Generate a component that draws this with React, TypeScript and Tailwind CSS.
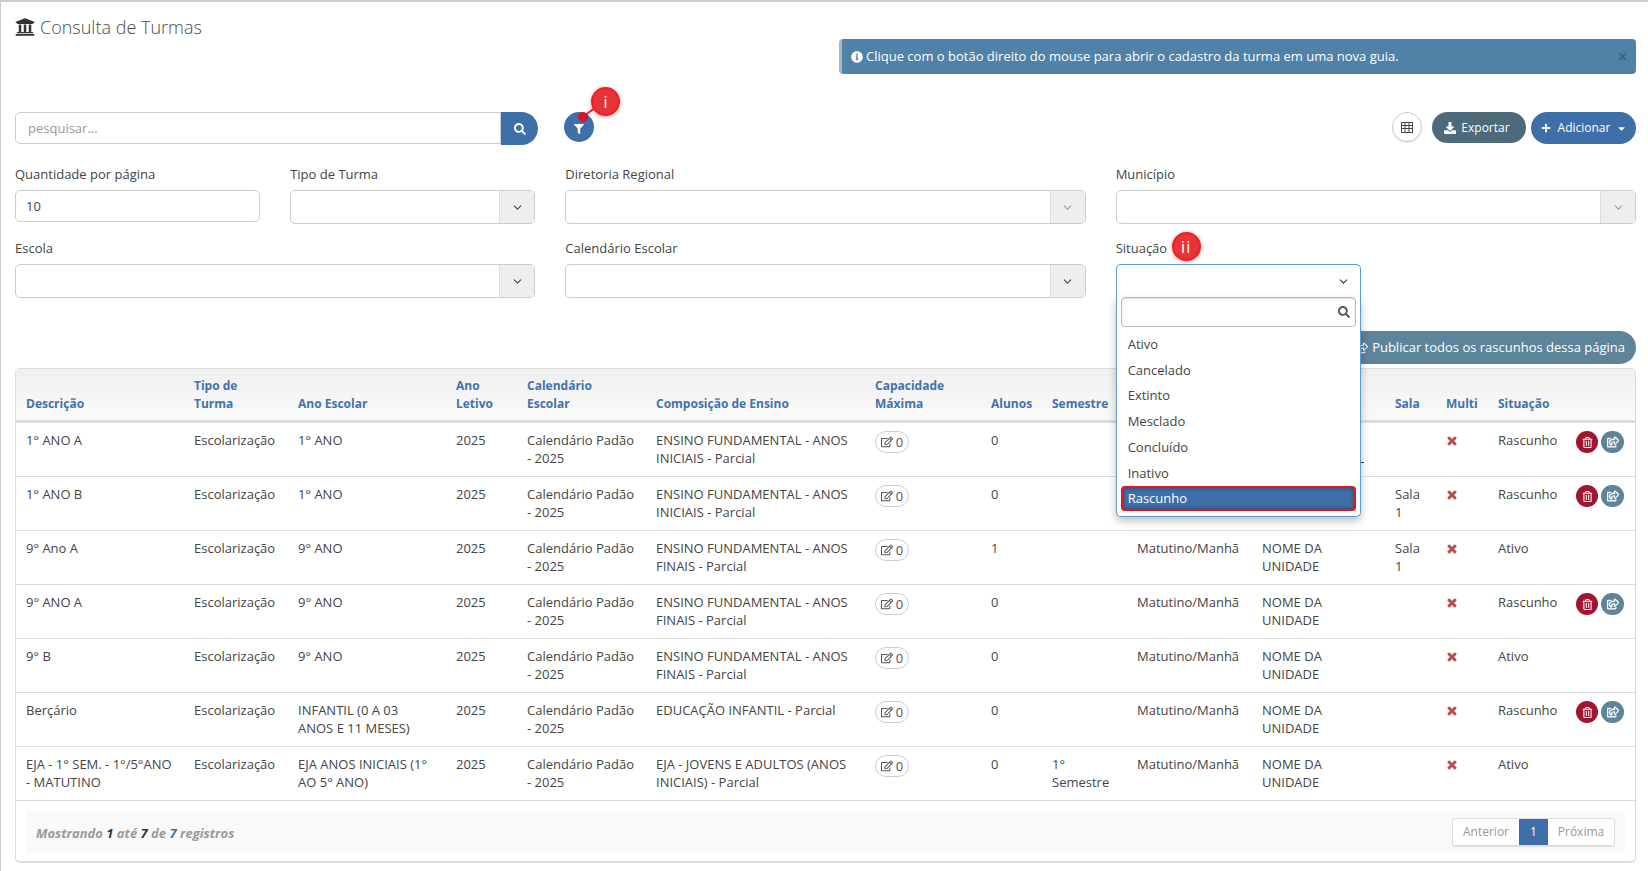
import React from "react";
import { ChevronDown } from "lucide-react";
import {
  FaUniversity, FaSearch, FaFilter, FaDownload, FaPlus, FaCaretDown, FaTimes,
  FaRegTrashAlt, FaRegShareSquare, FaInfoCircle, FaRegEdit,
} from "react-icons/fa";

type Row = {
  d: string; ano: string; aluno: string; comp: string; sem?: string; sala?: string; sit: string;
};

const rows: Row[] = [
  { d: "1° ANO A", ano: "1° ANO", aluno: "0", comp: "ENSINO FUNDAMENTAL - ANOS INICIAIS - Parcial", sit: "Rascunho" },
  { d: "1° ANO B", ano: "1° ANO", aluno: "0", comp: "ENSINO FUNDAMENTAL - ANOS INICIAIS - Parcial", sala: "Sala 1", sit: "Rascunho" },
  { d: "9° Ano A", ano: "9° ANO", aluno: "1", comp: "ENSINO FUNDAMENTAL - ANOS FINAIS - Parcial", sala: "Sala 1", sit: "Ativo" },
  { d: "9° ANO A", ano: "9° ANO", aluno: "0", comp: "ENSINO FUNDAMENTAL - ANOS FINAIS - Parcial", sit: "Rascunho" },
  { d: "9° B", ano: "9° ANO", aluno: "0", comp: "ENSINO FUNDAMENTAL - ANOS FINAIS - Parcial", sit: "Ativo" },
  { d: "Berçário", ano: "INFANTIL (0 A 03 ANOS E 11 MESES)", aluno: "0", comp: "EDUCAÇÃO INFANTIL - Parcial", sit: "Rascunho" },
  { d: "EJA - 1° SEM. - 1°/5°ANO - MATUTINO", ano: "EJA ANOS INICIAIS (1° AO 5° ANO)", aluno: "0", comp: "EJA - JOVENS E ADULTOS (ANOS INICIAIS) - Parcial", sem: "1° Semestre", sit: "Ativo" },
];

const headers = ["Descrição", "Tipo de Turma", "Ano Escolar", "Ano Letivo", "Calendário Escolar", "Composição de Ensino", "Capacidade Máxima", "Alunos", "Semestre", "", "", "Sala", "Multi", "Situação", ""];
const widths = ["w-[168px]", "w-[104px]", "w-[158px]", "w-[71px]", "w-[129px]", "w-[219px]", "w-[116px]", "w-[61px]", "w-[85px]", "w-[125px]", "w-[133px]", "w-[51px]", "w-[52px]", "w-[82px]", "w-[65px]"];
const options = ["Ativo", "Cancelado", "Extinto", "Mesclado", "Concluído", "Inativo"];

function Select({ muted }: { muted?: boolean }) {
  return (
    <div className="flex h-[34px] rounded-[5px] border border-[#ccc] bg-white">
      <div className="flex-1" />
      <div className="flex w-[35px] items-center justify-center rounded-r-[4px] border-l border-[#ddd] bg-[#eeeeee]">
        <ChevronDown size={13} strokeWidth={2} className={muted ? "text-[#999]" : "text-[#444]"} />
      </div>
    </div>
  );
}

function Label({ children }: { children: React.ReactNode }) {
  return <div className="mb-[7px] h-[18px] text-[13px] leading-[18px] text-[#444]">{children}</div>;
}

export default function App() {
  return (
    <div className="relative h-[871px] w-full overflow-hidden border-l border-t-2 border-[#ccc] bg-white pl-[14px] pr-[12px] font-['Open_Sans',sans-serif] text-[13px] text-[#444]">
      <div className="flex h-[72px] items-start justify-between">
        <div className="mt-[15px] flex items-center gap-[5px] text-[#4b4b4b]">
          <FaUniversity size={20} className="text-[#333]" />
          <span className="text-[18px] font-light leading-[20px]">Consulta de Turmas</span>
        </div>
        <div className="mt-[37px] flex h-[35px] w-[797px] items-center rounded-[4px] border-l-[3px] border-[#a3b6c9] bg-[#5082a8] pl-[9px] pr-[8px] text-[13px] text-white">
          <FaInfoCircle size={12} className="mr-[3px]" />
          <span className="flex-1">Clique com o botão direito do mouse para abrir o cadastro da turma em uma nova guia.</span>
          <FaTimes size={11} className="text-[#3a6484]" />
        </div>
      </div>

      <div className="mt-[38px] flex h-[33px] items-start">
        <input
          readOnly
          placeholder="pesquisar..."
          className="h-[32px] w-[486px] rounded-l-[5px] border border-[#ccc] px-[12px] text-[13px] outline-none placeholder:text-[#999]"
        />
        <button className="flex h-[33px] w-[37px] items-center justify-center rounded-r-full bg-[#3f6fa8] text-white">
          <FaSearch size={12} />
        </button>
        <div className="relative ml-[26px] flex h-[30px] w-[30px] items-center justify-center rounded-full bg-[#3f6fa8] text-white">
          <FaFilter size={10} className="mt-[3px]" />
          <div className="absolute left-[16px] top-[-4px] h-[2px] w-[27px] -rotate-[36deg] bg-[#ee1c25]" />
          <div className="absolute left-[14px] top-0 h-[10px] w-[10px] rounded-full bg-[#d8102a]" />
          <div className="absolute left-[27px] top-[-25px] flex h-[29px] w-[29px] items-center justify-center rounded-full border-2 border-[#f81d1d] bg-[#e53538] text-[16px] text-white shadow-[0_1px_4px_rgba(0,0,0,0.3)]">i</div>
        </div>
        <div className="flex-1" />
        <div className="flex h-[30px] w-[30px] items-center justify-center rounded-full border border-[#ccc] bg-white shadow-[0_1px_1px_rgba(0,0,0,0.1)]">
          <svg width="12" height="11" viewBox="0 0 12 11" fill="none" stroke="#444" strokeWidth="1">
            <rect x="0.5" y="0.5" width="11" height="10" />
            <path d="M0.5 3.5H11.5M0.5 6.5H11.5M4 0.5V10.5M8 0.5V10.5" />
          </svg>
        </div>
        <button className="ml-[10px] flex h-[31px] w-[94px] items-center justify-center gap-[5px] rounded-full bg-[#4c6a7a] pr-[4px] text-[12px] text-white">
          <FaDownload size={12} /> Exportar
        </button>
        <button className="ml-[5px] flex h-[32px] w-[105px] items-center justify-center gap-[5px] rounded-full bg-[#3f6fa8] pl-[1px] text-[12px] text-white">
          <FaPlus size={10} className="mr-[2px]" /> Adicionar <FaCaretDown size={11} className="ml-[1px]" />
        </button>
      </div>

      <div className="mt-[20px] grid grid-cols-12 gap-x-[30px] gap-y-[15px]">
        <div className="col-span-2">
          <Label>Quantidade por página</Label>
          <div className="flex h-[32px] items-center rounded-[5px] border border-[#ccc] px-[10px] pt-[1px] text-[13px]">10</div>
        </div>
        <div className="col-span-2">
          <Label>Tipo de Turma</Label>
          <Select />
        </div>
        <div className="col-span-4">
          <Label>Diretoria Regional</Label>
          <Select muted />
        </div>
        <div className="col-span-4">
          <Label>Município</Label>
          <Select muted />
        </div>
        <div className="col-span-4">
          <Label>Escola</Label>
          <Select />
        </div>
        <div className="col-span-4">
          <Label>Calendário Escolar</Label>
          <Select />
        </div>
        <div className="relative z-20 col-span-2">
          <div className="relative">
            <Label>Situação</Label>
            <div className="absolute left-[56px] top-[-7px] flex h-[29px] w-[29px] items-center justify-center rounded-full border-2 border-[#f81d1d] bg-[#e53538] text-[16px] tracking-[1px] text-white shadow-[0_1px_4px_rgba(0,0,0,0.3)]">ii</div>
          </div>
          <div className="relative">
            <div className="flex h-[33px] items-center justify-end rounded-t-[5px] border border-b-0 border-[#5b9bd5] bg-white pr-[10px]">
              <ChevronDown size={13} strokeWidth={2} className="text-[#333]" />
            </div>
            <div className="absolute left-0 right-0 top-full h-[220px] rounded-b-[5px] border border-t-0 border-[#5b9bd5] bg-white px-[4px] shadow-[0_4px_8px_rgba(0,0,0,0.25)]">
              <div className="absolute left-[calc(100%+1px)] top-[165px] h-[1px] w-[3px] bg-[#333]" />
              <div className="flex h-[30px] items-center justify-end rounded-[4px] border border-[#bbb] pr-[5px] shadow-[inset_0_1px_2px_rgba(0,0,0,0.15)]">
                <FaSearch size={12} className="text-[#555]" />
              </div>
              <div className="mt-[5px]">
                {options.map((o) => (
                  <div key={o} className="flex h-[25.7px] items-center px-[7px] text-[13px] text-[#444]">{o}</div>
                ))}
              </div>
              <div className="flex h-[25px] items-center rounded-[4px] border-2 border-[#f0101a] bg-[#3f6fa8] px-[5px] text-[13px] text-white shadow-[inset_0_0_4px_rgba(0,0,0,0.4)]">Rascunho</div>
            </div>
          </div>
        </div>
      </div>

      <div className="mt-[33px] flex justify-end">
        <button className="flex h-[33px] w-[300px] items-center justify-end gap-[4px] rounded-full bg-[#5d8499] pr-[11px] text-[13px] text-white">
          <FaRegShareSquare size={12} /> Publicar todos os rascunhos dessa página
        </button>
      </div>

      <div className="mt-[4px] rounded-[5px] border border-b-2 border-[#dcdcdc]">
        <table className="w-full table-fixed border-collapse">
          <colgroup>
            {widths.map((w, i) => <col key={i} className={w} />)}
          </colgroup>
          <thead>
            <tr className="bg-gradient-to-b from-[#f0f0f0] to-[#fafafa]">
              {headers.map((h, i) => (
                <th key={i} className="border-b-[3px] border-[#dddddd] px-[10px] pb-[7px] pt-[8px] text-left align-bottom text-[12px] font-bold leading-[18px] text-[#4272ac]">{h}</th>
              ))}
            </tr>
          </thead>
          <tbody>
            {rows.map((r, i) => (
              <tr key={i} className="border-b border-[#dddddd]">
                <td className="px-[10px] pb-[9px] pt-[8px] align-top leading-[18px]">{r.d}</td>
                <td className="px-[10px] pb-[9px] pt-[8px] align-top leading-[18px]">Escolarização</td>
                <td className="px-[10px] pb-[9px] pt-[8px] align-top leading-[18px]">{r.ano}</td>
                <td className="px-[10px] pb-[9px] pt-[8px] align-top leading-[18px]">2025</td>
                <td className="px-[10px] pb-[9px] pt-[8px] align-top leading-[18px]">Calendário Padão - 2025</td>
                <td className="px-[10px] pb-[9px] pt-[8px] align-top leading-[18px]">{r.comp}</td>
                <td className="px-[10px] pb-[9px] pt-[8px] align-top leading-[18px]">
                  <span className="flex h-[22px] w-[34px] items-center justify-center gap-[3px] rounded-full border border-[#ccc] text-[#555]">
                    <FaRegEdit size={12} />0
                  </span>
                </td>
                <td className="px-[10px] pb-[9px] pt-[8px] align-top leading-[18px]">{r.aluno}</td>
                <td className="px-[10px] pb-[9px] pt-[8px] align-top leading-[18px]">{r.sem}</td>
                <td className="px-[10px] pb-[9px] pt-[8px] align-top leading-[18px]">{i >= 2 ? "Matutino/Manhã" : ""}</td>
                <td className="px-[10px] pb-[9px] pt-[8px] align-top leading-[18px]">{i >= 2 ? "NOME DA UNIDADE" : ""}</td>
                <td className="px-[10px] pb-[9px] pt-[8px] align-top leading-[18px]">{r.sala}</td>
                <td className="px-[10px] pb-[9px] pt-[8px] align-top leading-[18px]">
                  <FaTimes size={12} className="mt-[4px] stroke-current stroke-[40] text-[#b94a48]" />
                </td>
                <td className="px-[10px] pb-[9px] pt-[8px] align-top leading-[18px]">{r.sit}</td>
                <td className="pb-[9px] pl-[6px] pt-[8px] align-top">
                  {r.sit === "Rascunho" && (
                    <div className="flex gap-[3px]">
                      <span className="flex h-[22px] w-[22px] items-center justify-center rounded-full bg-[#a0152f] text-white"><FaRegTrashAlt size={11} /></span>
                      <span className="flex h-[22px] w-[23px] items-center justify-center rounded-full bg-[#5d8499] text-white"><FaRegShareSquare size={12} className="stroke-current stroke-[20]" /></span>
                    </div>
                  )}
                </td>
              </tr>
            ))}
          </tbody>
        </table>
        <div className="mx-[10px] mb-[8px] mt-[10px] flex h-[42px] items-center justify-between bg-[#f9f9f9] pl-[10px] pr-[10px]">
          <div className="mt-[3px] text-[13px] font-bold italic text-[#999]">
            Mostrando <span className="text-[#333]">1</span> até <span className="text-[#333]">7</span> de <span className="text-[#3f6fa8]">7</span> registros
          </div>
          <div className="flex h-[29px] overflow-hidden rounded-[3px] border border-b-2 border-[#ddd] bg-white text-[12px] text-[#999]">
            <div className="flex w-[66px] items-center justify-center">Anterior</div>
            <div className="flex w-[29px] items-center justify-center bg-[#3f6fa8] text-white">1</div>
            <div className="flex w-[66px] items-center justify-center">Próxima</div>
          </div>
        </div>
      </div>
    </div>
  );
}
